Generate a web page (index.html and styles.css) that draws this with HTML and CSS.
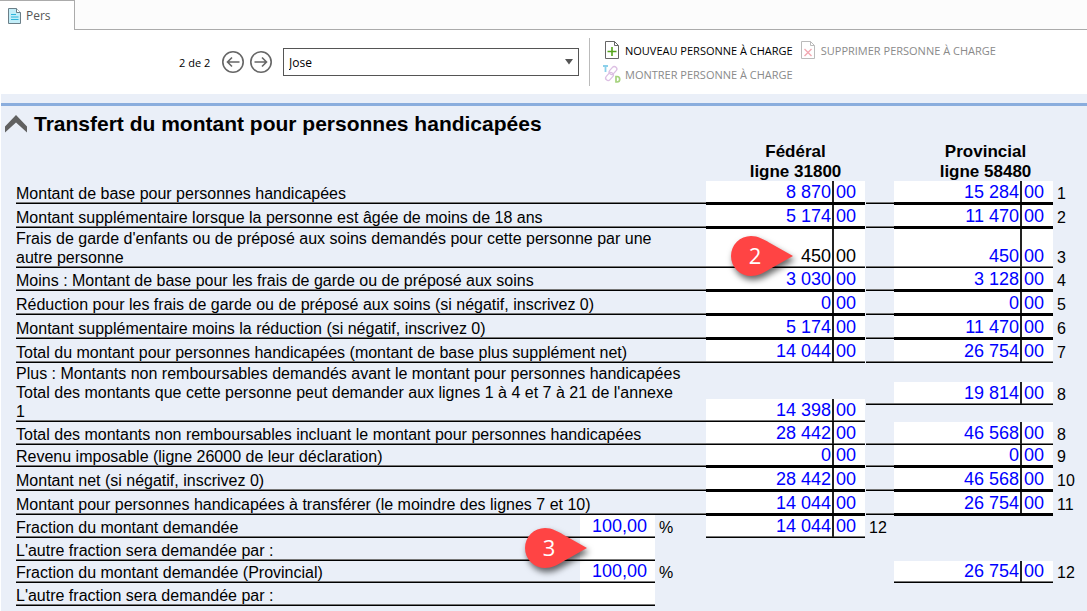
FILE: index.html
```html
<!DOCTYPE html>
<html lang="fr">
<head>
<meta charset="utf-8">
<title>Transfert du montant pour personnes handicapées</title>
<link rel="stylesheet" href="styles.css">
</head>
<body>
<nav class="tabs">
  <button class="tab" type="button">
    <svg width="14" height="16" viewBox="0 0 14 16"><path d="M.5.5h8l4 4v11H.5z" fill="#c3eef9" stroke="#6b7f88"/><path d="M8.500.5v4h4" fill="#fff" stroke="#6b7f88"/><path d="M3 6.500h5M3 9h7.500M3 11.500h7.500" stroke="#2db5dc"/></svg>
    Pers
  </button>
  <div class="tabs-rest"></div>
</nav>

<header class="toolbar">
  <div class="pager">
    <span class="position">2 de 2</span>
    <button type="button" class="icon-button" aria-label="Précédent"><svg width="22" height="22" viewBox="0 0 22 22"><circle cx="11" cy="11" r="10.200"/><path d="M17.500 11H5.500M10 6.500L5.500 11l4.500 4.500"/></svg></button>
    <button type="button" class="icon-button" aria-label="Suivant"><svg width="22" height="22" viewBox="0 0 22 22"><circle cx="11" cy="11" r="10.200"/><path d="M4.500 11h12M12 6.500l4.500 4.500-4.500 4.500"/></svg></button>
  </div>
  <div class="picker">
    <select aria-label="Personne à charge"><option>Jose</option></select>
    <svg class="picker-arrow" width="8" height="6" viewBox="0 0 8 6"><path d="M0 0h8L4 5.500z" fill="#555"/></svg>
  </div>
  <div class="actions">
    <div class="action-row">
      <button type="button" class="action">
        <svg width="18" height="18" viewBox="0 0 18 18" fill="none"><path d="M2.500.5h9l4 4v13h-13z" stroke="#666"/><path d="M11.500.5v4h4" stroke="#666"/><path d="M9 6v9M4.500 10.500h9" stroke="#55a51c" stroke-width="1.600"/></svg>
        NOUVEAU PERSONNE À CHARGE
      </button>
      <button type="button" class="action" disabled>
        <svg width="18" height="18" viewBox="0 0 18 18" fill="none"><path d="M2.500.5h9l4 4v13h-13z" stroke="#bbb"/><path d="M11.500.5v4h4" stroke="#bbb"/><path d="M5.500 8l7 7M12.500 8l-7 7" stroke="#f3a9b3" stroke-width="1.400"/></svg>
        SUPPRIMER PERSONNE À CHARGE
      </button>
    </div>
    <div class="action-row">
      <button type="button" class="action" disabled>
        <svg width="18" height="18" viewBox="0 0 18 18" fill="none"><path d="M0 1h5M2.500 1v6" stroke="#8bd0ea" stroke-width="1.800"/><rect x="7.500" y="1" width="5" height="9" rx="2.500" transform="rotate(42 10 5.500)" stroke="#dcbfe3" stroke-width="1.300"/><rect x="4" y="7" width="5" height="9" rx="2.500" transform="rotate(42 6.500 11.500)" stroke="#dcbfe3" stroke-width="1.300"/><path d="M13 11.500h1c3.600 0 3.600 5.500 0 5.500h-1z" stroke="#a5d27d" stroke-width="1.700"/></svg>
        MONTRER PERSONNE À CHARGE
      </button>
    </div>
  </div>
</header>

<main class="sheet">
  <h1 class="title">
    <svg width="22" height="18" viewBox="0 0 22 18"><path d="M0 11.500L11 0l11 11.500v6L11 7.500 0 17.500z" fill="#616161"/></svg>
    Transfert du montant pour personnes handicapées
  </h1>
  <table class="form">
    <thead>
      <tr class="row head"><td class="wide"></td><th class="fed" scope="col">Fédéral<br>ligne 31800</th><td class="link none"></td><th class="prov" scope="col">Provincial<br>ligne 58480</th><td class="num"></td></tr>
    </thead>
    <tbody>
      <tr class="row snug total"><td class="label wide">Montant de base pour personnes handicapées</td><td class="amount fed"><span class="dollars">8 870</span><span class="cents">00</span></td><td class="link"></td><td class="amount prov"><span class="dollars">15 284</span><span class="cents">00</span></td><td class="num">1</td></tr>
      <tr class="row total"><td class="label wide">Montant supplémentaire lorsque la personne est âgée de moins de 18 ans</td><td class="amount fed"><span class="dollars">5 174</span><span class="cents">00</span></td><td class="link"></td><td class="amount prov"><span class="dollars">11 470</span><span class="cents">00</span></td><td class="num">2</td></tr>
      <tr class="row tall"><td class="label wide"><label for="garde">Frais de garde d'enfants ou de préposé aux soins demandés pour cette personne par une<br>autre personne</label></td><td class="amount fed entry"><span class="dollars"><input id="garde" value="450"></span><span class="cents"><input aria-label="Cents" value="00"></span>
        <span class="callout callout-amount"><svg width="64" height="42" viewBox="0 0 64 42"><path d="M20 0C27 0 33 3.500 38 6.500L62 20 38 33.500C33 36.500 27 40 20 40A20 20 0 0 1 20 0z"/></svg><b>2</b></span></td><td class="link"></td><td class="amount prov"><span class="dollars">450</span><span class="cents">00</span></td><td class="num">3</td></tr>
      <tr class="row snug total"><td class="label wide">Moins : Montant de base pour les frais de garde ou de préposé aux soins</td><td class="amount fed"><span class="dollars">3 030</span><span class="cents">00</span></td><td class="link"></td><td class="amount prov"><span class="dollars">3 128</span><span class="cents">00</span></td><td class="num">4</td></tr>
      <tr class="row total"><td class="label wide">Réduction pour les frais de garde ou de préposé aux soins (si négatif, inscrivez 0)</td><td class="amount fed"><span class="dollars">0</span><span class="cents">00</span></td><td class="link"></td><td class="amount prov"><span class="dollars">0</span><span class="cents">00</span></td><td class="num">5</td></tr>
      <tr class="row total"><td class="label wide">Montant supplémentaire moins la réduction (si négatif, inscrivez 0)</td><td class="amount fed"><span class="dollars">5 174</span><span class="cents">00</span></td><td class="link"></td><td class="amount prov"><span class="dollars">11 470</span><span class="cents">00</span></td><td class="num">6</td></tr>
      <tr class="row"><td class="label wide">Total du montant pour personnes handicapées (montant de base plus supplément net)</td><td class="amount fed"><span class="dollars">14 044</span><span class="cents">00</span></td><td class="link"></td><td class="amount prov"><span class="dollars">26 754</span><span class="cents">00</span></td><td class="num">7</td></tr>
      <tr class="row split"><td class="label wide">Plus : Montants non remboursables demandés avant le montant pour personnes handicapées<br>Total des montants que cette personne peut demander aux lignes 1 à 4 et 7 à 21 de l'annexe<br>1</td><td class="amount fed"><span class="dollars">14 398</span><span class="cents">00</span></td><td class="link raised"></td><td class="amount prov raised"><span class="dollars">19 814</span><span class="cents">00</span></td><td class="num raised">8</td></tr>
      <tr class="row snug"><td class="label wide">Total des montants non remboursables incluant le montant pour personnes handicapées</td><td class="amount fed"><span class="dollars">28 442</span><span class="cents">00</span></td><td class="link"></td><td class="amount prov"><span class="dollars">46 568</span><span class="cents">00</span></td><td class="num">8</td></tr>
      <tr class="row tight total"><td class="label wide">Revenu imposable (ligne 26000 de leur déclaration)</td><td class="amount fed"><span class="dollars">0</span><span class="cents">00</span></td><td class="link"></td><td class="amount prov"><span class="dollars">0</span><span class="cents">00</span></td><td class="num">9</td></tr>
      <tr class="row total"><td class="label wide">Montant net (si négatif, inscrivez 0)</td><td class="amount fed"><span class="dollars">28 442</span><span class="cents">00</span></td><td class="link"></td><td class="amount prov"><span class="dollars">46 568</span><span class="cents">00</span></td><td class="num">10</td></tr>
      <tr class="row total"><td class="label wide">Montant pour personnes handicapées à transférer (le moindre des lignes 7 et 10)</td><td class="amount fed"><span class="dollars">14 044</span><span class="cents">00</span></td><td class="link"></td><td class="amount prov"><span class="dollars">26 754</span><span class="cents">00</span></td><td class="num">11</td></tr>
      <tr class="row snug"><td class="label"><label for="part-fed">Fraction du montant demandée</label></td><td class="fraction"><input id="part-fed" value="100,00"></td><td class="percent">%</td><td class="amount fed"><span class="dollars">14 044</span><span class="cents">00</span></td><td class="num">12</td><td class="cap"></td></tr>
      <tr class="row snug"><td class="label"><label for="other-fed">L'autre fraction sera demandée par :</label></td><td class="fraction"><input id="other-fed">
        <span class="callout callout-fraction"><svg width="64" height="42" viewBox="0 0 64 42"><path d="M20 0C27 0 33 3.500 38 6.500L62 20 38 33.500C33 36.500 27 40 20 40A20 20 0 0 1 20 0z"/></svg><b>3</b></span></td></tr>
      <tr class="row tight"><td class="label"><label for="part-prov">Fraction du montant demandée (Provincial)</label></td><td class="fraction"><input id="part-prov" value="100,00"></td><td class="percent">%</td><td class="amount prov"><span class="dollars">26 754</span><span class="cents">00</span></td><td class="num last">12</td></tr>
      <tr class="row snug"><td class="label"><label for="other-prov">L'autre fraction sera demandée par :</label></td><td class="fraction"><input id="other-prov"></td></tr>
    </tbody>
  </table>
</main>
</body>
</html>
```
FILE: styles.css
```css
* { box-sizing: border-box; }

body {
  margin: 0;
  min-height: 100vh;
  display: flex;
  flex-direction: column;
  background: #fff;
  color: #000;
  font-family: "Liberation Sans", Arial, sans-serif;
}

button, select, input { font: inherit; color: inherit; }
svg { flex: none; display: block; }

/* Tabs */
.tabs { display: flex; height: 30px; background: #fcfcfc; }
.tab {
  display: flex;
  align-items: center;
  gap: 4px;
  width: 75px;
  padding: 0 0 0 8px;
  border: solid #ababab;
  border-width: 1px 1px 0 0;
  background: #fff;
  color: #555;
  font: 12px/16px "Open Sans", sans-serif;
}
.tabs-rest { flex: 1; border-bottom: 1px solid #ababab; }

/* Toolbar */
.toolbar {
  display: flex;
  align-items: center;
  height: 64px;
  padding-left: 179px;
  font-family: "Open Sans", sans-serif;
  font-size: 11px;
}
.pager { display: flex; align-items: center; gap: 6px; }
.position { width: 37px; white-space: nowrap; }
.icon-button { padding: 0; border: 0; background: none; }
.icon-button svg { fill: none; stroke: #666; stroke-width: 1.6; }
.picker { position: relative; width: 296px; margin: 0 10px 0 11px; }
.picker select {
  display: block;
  width: 100%;
  height: 28px;
  padding: 0 5px;
  border: 1px solid #555;
  border-radius: 0;
  background: #fff;
  font-size: 12px;
  appearance: none;
}
.picker-arrow { position: absolute; right: 6px; top: 11px; pointer-events: none; }
.actions {
  display: flex;
  flex-direction: column;
  gap: 6px;
  padding: 3px 0 3px 13px;
  border-left: 1px solid #bbb;
}
.action-row { display: flex; gap: 6px; }
.action {
  display: flex;
  align-items: center;
  gap: 4px;
  height: 18px;
  padding: 0;
  border: 0;
  background: none;
  white-space: nowrap;
}
.action:disabled { color: #8a8a8a; }

/* Sheet */
.sheet {
  flex: 1;
  margin-left: 1px;
  padding-top: 9px;
  background: #eaeff8;
}
.title {
  display: flex;
  align-items: center;
  gap: 7px;
  height: 38px;
  margin: 0;
  padding-left: 4px;
  border-top: 3px solid #8aaddd;
  font-size: 21px;
}

.form { display: block; padding: 0 0 5px 15px; font-size: 16px; }
.form thead, .form tbody { display: block; }

/* label | fraction | % | federal | link | provincial | line number */
.row {
  display: grid;
  grid-template-columns: 1fr 75px 51px 159px 29px 159px 34px;
  min-height: 24px;
  line-height: 19px;
}
.row.snug { min-height: 23px; }
.row.tight { min-height: 22px; }
.row.tall { min-height: 40px; }
.row.split { min-height: 59px; }
.row td, .row th { padding: 0; }
.wide { grid-column: 1 / 4; }
.fed { grid-column: 4; }
.prov { grid-column: 6; }

.row.head { height: 40px; font-size: 17px; line-height: 20px; }
.head th.fed { padding: 1px 0 0 20px; }
.head th.prov { padding: 1px 0 0 24px; }

.row .label {
  display: flex;
  align-items: flex-end;
  border-bottom: 1px solid #000;
  box-shadow: inset 0 -1px #777;
  white-space: nowrap;
}
.link {
  margin-left: 1px;
  border-bottom: 1px solid #000;
  box-shadow: inset 0 -1px #777;
}
.link.none { border: 0; box-shadow: none; }

.amount {
  position: relative;
  display: flex;
  border-bottom: 1px solid #000;
  background: #fff;
  color: #00f;
  font-size: 18px;
  line-height: 18px;
}
.amount span.dollars, .amount span.cents {
  display: flex;
  align-items: flex-end;
  padding-bottom: 2px;
  box-shadow: inset 0 -1px #777;
}
.dollars { flex: 1; justify-content: flex-end; padding-right: 1px; border-right: 2px solid #222; }
.cents { width: 31px; padding-left: 2px; }
.entry { color: #000; }
.amount input { width: 100%; height: 18px; padding: 0; border: 0; background: none; }
.dollars input { text-align: right; }

/* A total's heavy rule runs over the top edge of the next row */
.total .amount { border-bottom-width: 2px; }
.total .amount span.dollars, .total .amount span.cents { padding-bottom: 1px; box-shadow: none; }
.total + .row .amount { border-top: 1px solid #000; }
.cap { grid-column: 6; height: 1px; background: #000; }

.num { display: flex; align-items: flex-end; line-height: 20px; }
.row .num { padding-left: 4px; }
.row .last { grid-column: 7; }

.split .amount { align-self: end; height: 23px; }
.split .raised { margin-bottom: 17px; }

.fraction {
  position: relative;
  display: flex;
  align-items: flex-end;
  border-bottom: 1px solid #000;
  box-shadow: inset 0 -1px #777;
  background: #fff;
}
.fraction input {
  width: 100%;
  height: 20px;
  padding: 0 8px 1px 0;
  border: 0;
  background: none;
  color: #00f;
  font-size: 18px;
  text-align: right;
}
.percent { display: flex; align-items: flex-end; line-height: 20px; }
.row .percent { padding-left: 4px; }

/* Callouts */
.callout { position: absolute; z-index: 1; width: 64px; height: 42px; }
.callout svg { fill: #ff4444; filter: drop-shadow(2px 4px 3px rgba(0, 0, 0, .6)); overflow: visible; }
.callout b {
  position: absolute;
  inset: 0 auto auto 0;
  width: 48px;
  text-align: center;
  color: #fff;
  font: 22px/38px "Open Sans", sans-serif;
}
.callout-amount { left: 25px; top: 7px; }
.callout-fraction { left: -55px; top: -10px; }
```
